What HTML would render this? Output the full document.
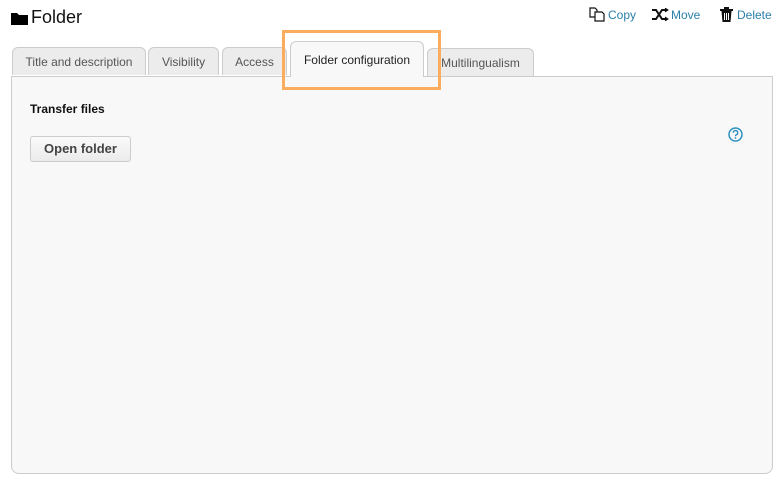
<!DOCTYPE html>
<html><head><style>
body{margin:0;width:781px;height:482px;background:#fff;font-family:"Liberation Sans",Arial,sans-serif;position:relative;overflow:hidden}
.abs{position:absolute}
.tab{position:absolute;top:47px;height:28px;background:#ececec;border:1px solid #ccc;border-bottom:none;border-radius:6px 6px 0 0;font-size:12px;color:#555;text-align:center;line-height:28px;box-sizing:border-box}
.act{top:41px;height:36px;background:#f8f8f8;color:#222;line-height:36px;z-index:2}
.panel{position:absolute;left:11px;top:76px;width:762px;height:398px;box-sizing:border-box;border:1px solid #ccc;border-radius:0 0 8px 8px;background:#f8f8f8}
.act2{line-height:36px}
.lnk{font-size:12px;color:#2b7fa8;position:absolute;top:8px}
</style></head><body>
<svg class="abs" style="left:11px;top:12px" width="17" height="13" viewBox="0 0 17 13"><path d="M0 1h6l2 2h9v10H0z" fill="#000"/></svg>
<div class="abs" style="left:31px;top:7px;font-size:18px;color:#111">Folder</div>

<svg class="abs" style="left:589px;top:7px" width="17" height="15" viewBox="0 0 17 15" fill="none" stroke="#111" stroke-width="1.2"><path d="M1 1h5l2 2v7H1z"/><path d="M6 5h7l2 2v7H6z" fill="#fff"/></svg>
<div class="lnk" style="left:608px">Copy</div>
<svg class="abs" style="left:652px;top:8px" width="17" height="13" viewBox="0 0 17 13" fill="none" stroke="#111" stroke-width="2"><path d="M0 2h4l6 9h4M0 11h4l6-9h4"/><path d="M13 0l3 2-3 2M13 9l3 2-3 2" fill="#111" stroke-width="1"/></svg>
<div class="lnk" style="left:671px">Move</div>
<svg class="abs" style="left:720px;top:7px" width="13" height="15" viewBox="0 0 13 15"><path d="M0 2h13v2H0zM4 0h5v2H4z" fill="#111"/><path d="M1.5 4h10l-1 11h-8z" fill="#111"/><path d="M4.5 6v7M6.5 6v7M8.5 6v7" stroke="#fff" stroke-width="1"/></svg>
<div class="lnk" style="left:737px">Delete</div>

<div class="panel"></div>
<div class="tab" style="left:12px;width:134px">Title and description</div>
<div class="tab" style="left:148px;width:71px">Visibility</div>
<div class="tab" style="left:222px;width:65px">Access</div>
<div class="tab act" style="left:290px;width:134px">Folder configuration</div>
<div class="tab" style="left:427px;width:107px;top:48px;height:28px">Multilingualism</div>
<div class="abs" style="left:282px;top:30px;width:153px;height:54px;border:3px solid #fbad5d;z-index:3"></div>

<div class="abs" style="left:30px;top:102px;font-size:12px;font-weight:bold;color:#111">Transfer files</div>
<div class="abs" style="left:30px;top:136px;width:99px;height:24px;border:1px solid #ccc;border-radius:3px;background:linear-gradient(#fafafa,#ebebeb);font-size:13px;font-weight:bold;color:#444;text-align:center;line-height:24px">Open folder</div>
<svg class="abs" style="left:728px;top:127px" width="15" height="15" viewBox="0 0 15 15"><circle cx="7.5" cy="7.5" r="6.5" fill="none" stroke="#2b8fc0" stroke-width="1.5"/><path d="M5.3 5.8a2.2 2.2 0 1 1 3 2c-.6.3-.8.7-.8 1.4" fill="none" stroke="#2b8fc0" stroke-width="1.4"/><circle cx="7.5" cy="11" r=".9" fill="#2b8fc0"/></svg>
</body></html>
